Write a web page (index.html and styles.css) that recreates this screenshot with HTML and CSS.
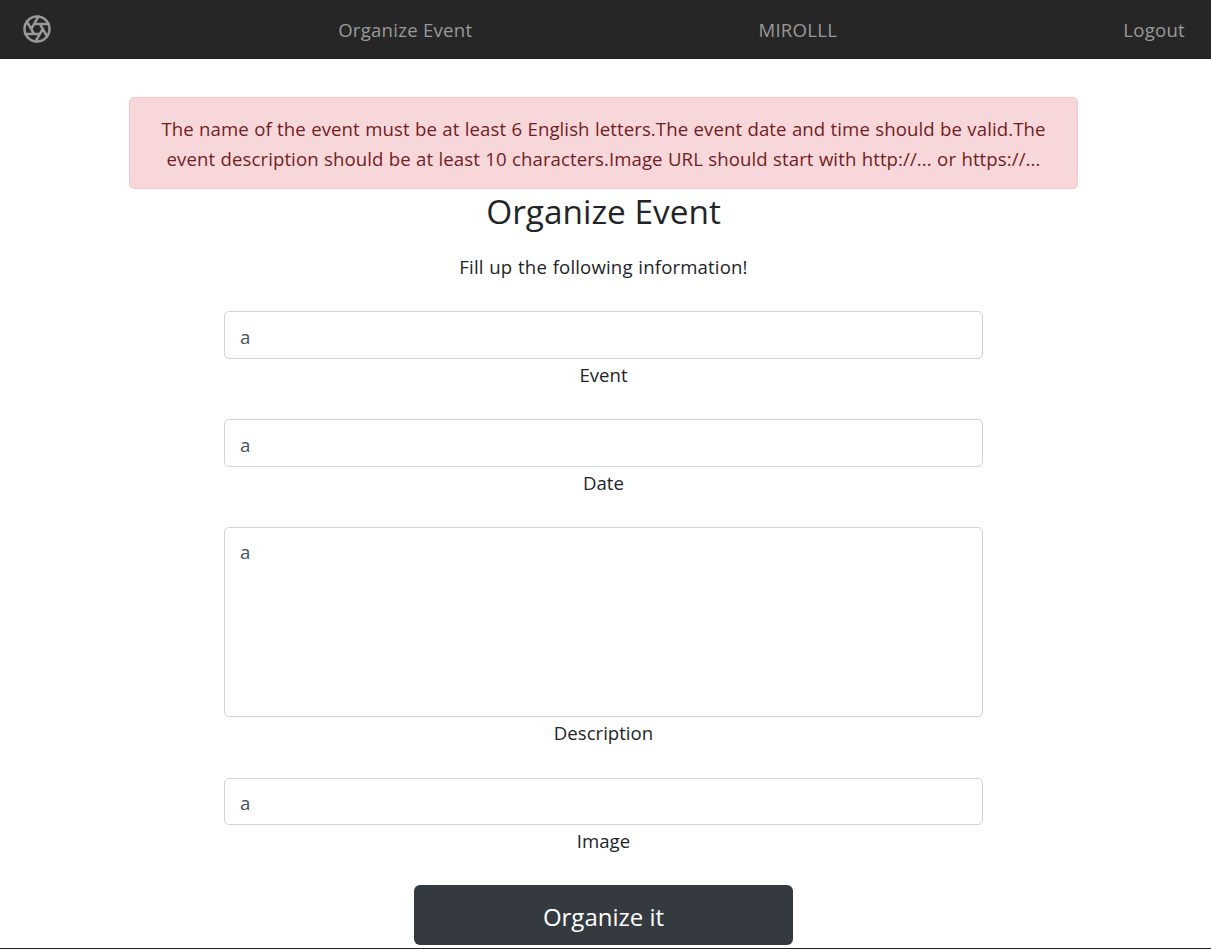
FILE: index.html
```
<!DOCTYPE html>
<html lang="en">
<head>
<meta charset="utf-8">
<title>Organize Event</title>
<link rel="stylesheet" href="styles.css">
</head>
<body>
<nav class="site-header">
  <a class="nav-link logo" href="#" aria-label="Home">
    <svg width="30" height="30" viewBox="0 0 24 24" fill="none" stroke="currentColor" stroke-width="2" stroke-linecap="round" stroke-linejoin="round"><circle cx="12" cy="12" r="10"/><path d="M14.31 8l5.74 9.94M9.69 8h11.48M7.38 12l5.74-9.94M9.69 16L3.95 6.06M14.31 16H2.83m13.79-4l-5.74 9.94"/></svg>
  </a>
  <a class="nav-link" href="#">Organize Event</a>
  <a class="nav-link user" href="#">MIROLLL</a>
  <a class="nav-link" href="#">Logout</a>
</nav>
<main class="content">
  <div class="alert">The name of the event must be at least 6 English letters.The event date and time should be valid.The<br>event description should be at least 10 characters.Image URL should start with http://... or https://...</div>
  <h1 class="title">Organize Event</h1>
  <p class="lead">Fill up the following information!</p>
  <form class="form">
    <div class="group"><input class="control" id="event" type="text" value="a"><label for="event">Event</label></div>
    <div class="group"><input class="control" id="date" type="text" value="a"><label for="date">Date</label></div>
    <div class="group tall"><textarea class="control area" id="description">a</textarea><label for="description">Description</label></div>
    <div class="group"><input class="control short" id="image" type="text" value="a"><label for="image">Image</label></div>
    <button class="submit" type="button">Organize it</button>
  </form>
</main>
<footer class="footer"></footer>
</body>
</html>
```
FILE: styles.css
```
* { box-sizing: border-box; }
html, body { height: 100%; }
body {
  margin: 0;
  display: flex;
  flex-direction: column;
  overflow: hidden;
  background: #fff;
  color: #212529;
  font: 400 18.6px/30px "Segoe UI", "Open Sans", "Noto Sans", sans-serif;
}
.site-header {
  flex: none;
  height: 59px;
  padding: 0 26px 0 22px;
  display: flex;
  justify-content: space-between;
  align-items: center;
  background: #262626;
}
.nav-link { color: #999; text-decoration: none; letter-spacing: .25px; }
.logo { display: flex; margin-bottom: 2px; }
.content {
  flex: none;
  width: 949px;
  margin: 38px 0 0 129px;
  height: 851px;
  text-align: center;
}
.alert {
  height: 92px;
  padding: 16px 0;
  border: 1px solid #f5c6cb;
  border-radius: 5px;
  background: #f8d7da;
  color: #721c24;
  white-space: nowrap;
  word-spacing: .4px;
  letter-spacing: .09px;
}
.title { margin: 0; font-size: 33.4px; font-weight: 400; line-height: 45px; }
.lead { margin: 18px 0 29px; letter-spacing: .15px; word-spacing: .7px; }
.form { width: 759px; margin: 0 auto; }
.group { height: 108px; }
.group.tall { height: 251px; }
.group label { display: block; margin-top: 1px; }
.control {
  display: block;
  width: 100%;
  height: 48px;
  padding: 3px 15px 0;
  border: 1px solid #ced4da;
  border-radius: 5px;
  background: #fff;
  color: #495057;
  font: inherit;
}
.short { height: 47px; padding-top: 2px; }
.area { height: 190px; padding-top: 9px; resize: none; overflow: hidden; }
.submit {
  display: block;
  width: 379px;
  height: 60px;
  margin: -1px auto 0;
  padding: 4px 0 0;
  border: 0;
  border-radius: 6px;
  background: #343a40;
  color: #fff;
  font: inherit;
  font-size: 24px;
}
.footer { flex: none; height: 1px; background: #212121; }
```
